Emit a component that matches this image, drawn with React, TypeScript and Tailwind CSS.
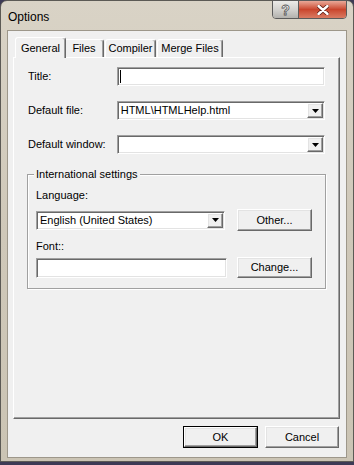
import React from "react";

const font = { fontFamily: '"Liberation Sans", Arial, sans-serif' };

const sunken =
  "border border-t-[#a0a0a0] border-l-[#a0a0a0] border-r-white border-b-white shadow-[inset_1px_1px_0_#696969,inset_-1px_-1px_0_#e3e3e3] bg-white";

const raised =
  "border border-t-white border-l-white border-r-[#696969] border-b-[#696969] shadow-[inset_-1px_-1px_0_#a0a0a0,inset_1px_1px_0_#e3e3e3] bg-[#f0f0f0]";

const Arrow = () => (
  <svg width="7" height="4" viewBox="0 0 7 4">
    <polygon points="0,0 7,0 3.5,4" fill="#000" />
  </svg>
);

const Input = ({ w, h = 19, caret }: { w: string; h?: number; caret?: boolean }) => (
  <div className={`${w} ${sunken} flex items-center px-[2px]`} style={{ height: h }}>
    {caret && <div className="h-[13px] w-px bg-black" />}
  </div>
);

const Combo = ({ w, value }: { w: string; value?: string }) => (
  <div className={`${w} ${sunken} flex h-[19px] items-stretch p-[1px]`}>
    <div className="flex flex-1 items-center pl-[2px] text-[11px] text-black">{value}</div>
    <div className={`${raised} flex w-[16px] items-center justify-center`}>
      <Arrow />
    </div>
  </div>
);

const Button = ({ label, w, h = 22, def }: { label: string; w: string; h?: number; def?: boolean }) => (
  <div
    className={`${w} ${def ? "border border-black" : ""} flex`}
    style={{ height: h }}
  >
    <div className={`${raised} flex flex-1 items-center justify-center text-[11px] text-black`}>
      {label}
    </div>
  </div>
);

const Tab = ({ label, w, active }: { label: string; w: string; active?: boolean }) => (
  <div
    className={`${w} ${
      active ? "z-10 -mb-px h-[21px] -mx-[2px]" : "h-[18px]"
    } flex items-center justify-center rounded-t-[3px] border-l border-t border-r border-l-white border-t-white border-r-[#696969] bg-[#f0f0f0] text-[11px] text-black shadow-[inset_-1px_0_0_#a0a0a0]`}
  >
    {label}
  </div>
);

export default function App() {
  return (
    <div
      className="flex h-[465px] w-[354px] flex-col overflow-hidden bg-[#3d3a55]"
      style={font}
    >
      <div className="flex h-[462px] flex-col rounded-t-[7px] border border-[#5c5a55] bg-gradient-to-b from-[#d9d3c6] via-[#cfc8b9] to-[#cbc4b4]">
        {/* title bar */}
        <div className="flex h-[29px] items-start">
          <div className="flex-1 pl-[7px] pt-[7px] text-[12px] text-black">Options</div>
          <div className="mr-[6px] flex h-[19px] -mt-px overflow-hidden rounded-b-[4px] border border-[#5b5b5b]">
            <div className="flex w-[26px] items-center justify-center border-r border-[#5b5b5b] bg-gradient-to-b from-[#ecebe8] via-[#d3d2cf] to-[#b3b2ae]">
              <span
                className="text-[14px] font-bold leading-none text-white"
                style={{ WebkitTextStroke: "0.8px #555" }}
              >
                ?
              </span>
            </div>
            <div className="flex w-[47px] items-center justify-center bg-gradient-to-b from-[#e8a898] via-[#c9452d] to-[#d97a62]">
              <svg width="12" height="10" viewBox="0 0 12 10">
                <path d="M1.5 1 L10.5 9 M10.5 1 L1.5 9" stroke="#5a1a10" strokeWidth="4" strokeLinecap="round" />
                <path d="M1.5 1 L10.5 9 M10.5 1 L1.5 9" stroke="#fff" strokeWidth="2.4" strokeLinecap="round" />
              </svg>
            </div>
          </div>
        </div>

        {/* client */}
        <div className="mx-[6px] flex h-[428px] flex-col border border-[#9d978a] bg-[#f0f0f0] pl-[5px] pr-[6px] pt-[6px]">
          <div className="flex h-[20px] items-end pl-[4px]">
            <Tab label="General" w="w-[51px]" active />
            <Tab label="Files" w="w-[40px]" />
            <div className="w-px" />
            <Tab label="Compiler" w="w-[51px]" />
            <div className="w-px" />
            <Tab label="Merge Files" w="w-[66px]" />
          </div>

          <div className="flex h-[362px] w-[327px] flex-col border border-l-white border-t-white border-r-[#696969] border-b-[#696969] px-[14px] pt-[9px] text-[11px] text-black shadow-[inset_-1px_-1px_0_#a0a0a0]">
            <div className="flex items-center">
              <div className="w-[89px]">Title:</div>
              <Input w="w-[209px]" caret />
            </div>
            <div className="mt-[15px] flex items-center">
              <div className="w-[89px]">Default file:</div>
              <Combo w="w-[209px]" value="HTML\HTMLHelp.html" />
            </div>
            <div className="mt-[15px] flex items-center">
              <div className="w-[89px]">Default window:</div>
              <Combo w="w-[209px]" />
            </div>

            <div className="relative -ml-px mt-[20px] h-[115px] w-[299px] border border-[#a0a0a0] pl-[8px] pt-[14px] shadow-[inset_1px_1px_0_#fff,1px_1px_0_#fff]">
              <div className="absolute -top-[7px] left-[6px] bg-[#f0f0f0] px-[2px] leading-[13px]">
                International settings
              </div>
              <div className="leading-[13px]">Language:</div>
              <div className="mt-[7px] flex h-[22px] items-center">
                <Combo w="w-[189px]" value="English (United States)" />
                <div className="ml-[12px]">
                  <Button label="Other..." w="w-[75px]" />
                </div>
              </div>
              <div className="mt-[9px] leading-[13px]">Font::</div>
              <div className="mt-[4px] flex h-[21px] items-center">
                <Input w="w-[191px]" h={20} />
                <div className="ml-[10px]">
                  <Button label="Change..." w="w-[75px]" h={21} />
                </div>
              </div>
            </div>
          </div>

          <div className="mt-[7px] flex justify-end gap-[7px] pr-px">
            <Button label="OK" w="w-[75px]" def />
            <Button label="Cancel" w="w-[74px]" />
          </div>
        </div>
      </div>
    </div>
  );
}
